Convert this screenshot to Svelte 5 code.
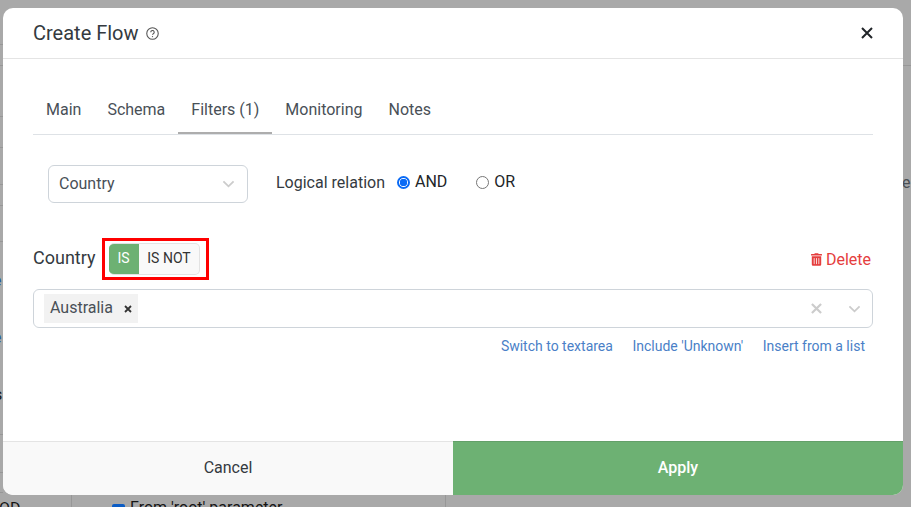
<script>
  const tabs = ['Main', 'Schema', 'Filters (1)', 'Monitoring', 'Notes'];
  const lefts = [44, 65, 116, 147, 184, 205, 241, 434, 472, 492];
</script>

<div class="page">
  <div class="behind" aria-hidden="true">
    {#each lefts as y}
      <i class="hline" style="top:{y}px"></i>
    {/each}
    <i class="rline"></i>
    <i class="vline a"></i>
    <i class="vline b"></i>
    <span class="bit blue b1">e</span>
    <span class="bit blue b2">e</span>
    <span class="bit dark b3">s</span>
    <span class="bit dark b4">e</span>
    <span class="bit dark b5">OD</span>
    <i class="check"></i>
    <span class="bit dark b6">From 'root' parameter</span>
  </div>

  <div class="modal">
    <header>
      <h1>Create Flow</h1>
      <svg class="help" viewBox="0 0 12 12" width="13" height="13">
        <circle cx="6" cy="6" r="5.300" fill="none" stroke="#555" stroke-width="1" />
        <path d="M4.400 4.900a1.600 1.600 0 1 1 2.400 1.300c-.5.300-.8.500-.8 1" fill="none" stroke="#555" stroke-width="1" />
        <circle cx="6" cy="8.800" r=".6" fill="#555" />
      </svg>
      <svg class="close" viewBox="0 0 12 12" width="12" height="12">
        <path d="M1 1l10 10M11 1L1 11" stroke="#212529" stroke-width="2" />
      </svg>
    </header>

    <main>
      <nav>
        {#each tabs as t, i}
          <span class="tab" class:active={i === 2}>{t}</span>
        {/each}
      </nav>

      <div class="settings">
        <div class="select">
          <span class="lift">Country</span>
          <svg viewBox="0 0 14 8" width="13" height="8"><path d="M1.500 1.200L7 6.500l5.500-5.300" fill="none" stroke="#ccc" stroke-width="2" /></svg>
        </div>
        <span class="logical">Logical relation</span>
        <label class="radio"><i class="dot on"></i><span class="lift">AND</span></label>
        <label class="radio second"><i class="dot"></i><span class="lift">OR</span></label>
      </div>

      <div class="filter-head">
        <span class="filter-name">Country</span>
        <div class="highlight">
          <div class="toggle">
            <span class="is">IS</span>
            <span class="isnot">IS NOT</span>
          </div>
        </div>
        <span class="delete">
          <svg viewBox="0 0 448 512" width="11" height="13"><path fill="#e53e3e" d="M32 464a48 48 0 0 0 48 48h288a48 48 0 0 0 48-48V128H32zm272-256a16 16 0 0 1 32 0v224a16 16 0 0 1-32 0zm-96 0a16 16 0 0 1 32 0v224a16 16 0 0 1-32 0zm-96 0a16 16 0 0 1 32 0v224a16 16 0 0 1-32 0zM432 32H312l-9.400-18.700A24 24 0 0 0 281.100 0H166.800a23.700 23.700 0 0 0-21.400 13.300L136 32H16A16 16 0 0 0 0 48v32a16 16 0 0 0 16 16h416a16 16 0 0 0 16-16V48a16 16 0 0 0-16-16z"/></svg>
          Delete
        </span>
      </div>

      <div class="multi">
        <span class="tag"><span class="lift">Australia</span>
          <svg viewBox="0 0 8 8" width="8" height="8"><path d="M1 1l6 6M7 1L1 7" stroke="#333" stroke-width="1.800" /></svg>
        </span>
        <svg class="clear" viewBox="0 0 12 12" width="11" height="11"><path d="M1 1l10 10M11 1L1 11" stroke="#ccc" stroke-width="2.400" /></svg>
        <svg class="caret" viewBox="0 0 14 8" width="13" height="8"><path d="M1.500 1.200L7 6.500l5.500-5.300" fill="none" stroke="#ccc" stroke-width="2" /></svg>
      </div>

      <div class="links">
        <span>Switch to textarea</span>
        <span>Include 'Unknown'</span>
        <span>Insert from a list</span>
      </div>
    </main>

    <footer>
      <button class="cancel">Cancel</button>
      <button class="apply">Apply</button>
    </footer>
  </div>
</div>

<style>
  :global(body) {
    margin: 0;
    background: #a9a9a9;
    font-family: Roboto, "Liberation Sans", sans-serif;
    color: #212529;
  }
  .page {
    position: relative;
    height: 507px;
    width: 911px;
    overflow: hidden;
    box-sizing: border-box;
    padding: 8px 8px 12px 3px;
    background: #a9a9a9;
  }
  .behind { position: absolute; inset: 0; }
  .hline { position: absolute; left: 0; width: 3px; height: 1px; background: #979797; }
  .rline { position: absolute; left: 903px; right: 0; top: 65px; height: 1px; background: #979797; }
  .vline { position: absolute; top: 495px; bottom: 0; width: 1px; background: #979797; }
  .vline.a { left: 71px; }
  .vline.b { left: 445px; }
  .bit { position: absolute; font-size: 16px; line-height: 18px; white-space: nowrap; }
  .blue { color: #2a5a9a; }
  .dark { color: #151515; }
  .b1 { left: -7px; top: 272px; }
  .b2 { left: -7px; top: 329px; }
  .b3 { left: -6px; top: 386px; }
  .b4 { left: 902px; top: 174px; color: #4a4f55; }
  .b5 { left: -1px; top: 500px; }
  .b6 { left: 130px; top: 499px; }
  .check { position: absolute; left: 112px; top: 504px; width: 13px; height: 13px; background: #0b5cc4; border-radius: 2px; }

  .modal {
    position: relative;
    height: 487px;
    background: #fff;
    border-radius: 10px;
    overflow: hidden;
    display: flex;
    flex-direction: column;
  }
  header {
    height: 50px;
    flex: none;
    border-bottom: 1px solid #e4e4e4;
    display: flex;
    align-items: center;
    padding: 0 30px;
    gap: 7px;
  }
  h1 { margin: 0; font-size: 20px; font-weight: 400; color: #343a40; }
  .close { margin-left: auto; }
  main { flex: 1; padding: 0 30px; display: flex; flex-direction: column; }
  nav {
    margin-top: 31px;
    height: 44px;
    display: flex;
    border-bottom: 1px solid #dee2e6;
    box-sizing: content-box;
  }
  .tab {
    padding: 0 13px;
    font-size: 16px;
    line-height: 40px;
    height: 44px;
    box-sizing: border-box;
    color: #495057;
  }
  .tab.active { border-bottom: 2px solid #adadad; }
  .settings {
    margin: 30px 0 0 15px;
    height: 38px;
    display: flex;
    align-items: center;
    font-size: 16px;
  }
  .select {
    width: 200px;
    height: 38px;
    box-sizing: border-box;
    border: 1px solid #ced4da;
    border-radius: 6px;
    display: flex;
    align-items: center;
    justify-content: space-between;
    padding: 0 12px 0 10px;
    color: #495057;
  }
  .lift { padding-bottom: 2px; }
  .logical { margin-left: 28px; padding-bottom: 3px; color: #343a40; }
  .radio { display: flex; align-items: center; gap: 5px; margin: -3px 0 0 12px; color: #212529; }
  .radio.second { margin-left: 29px; }
  .dot {
    width: 13px;
    height: 13px;
    box-sizing: border-box;
    border: 1px solid #767676;
    border-radius: 50%;
    background: #fff;
  }
  .dot.on { border: 2px solid #0b6bf5; background: radial-gradient(circle, #0b6bf5 0 3.500px, #fff 4px); }
  .filter-head {
    margin-top: 35px;
    height: 42px;
    display: flex;
    align-items: center;
  }
  .filter-name { font-size: 18px; padding-bottom: 4px; color: #343a40; }
  .highlight {
    margin-left: 6px;
    width: 107px;
    height: 42px;
    box-sizing: border-box;
    border: 3px solid #f00;
    padding: 2px 4px;
  }
  .toggle {
    width: 91px;
    height: 32px;
    box-sizing: border-box;
    border: 1px solid #e3e3e3;
    border-left: 0;
    border-radius: 5px;
    overflow: hidden;
    display: flex;
    font-size: 14px;
    line-height: 29px;
    text-align: center;
    background: #f9f9f9;
  }
  .is { width: 30px; margin: -1px 0; line-height: 31px; background: #6db173; color: #fff; }
  .isnot { flex: 1; padding-left: 1px; color: #333; }
  .delete {
    margin-left: auto;
    margin-right: 2px;
    color: #e53e3e;
    font-size: 16px;
    display: flex;
    align-items: center;
    gap: 4px;
  }
  .multi {
    margin-top: 9px;
    height: 39px;
    box-sizing: border-box;
    border: 1px solid #ced4da;
    border-radius: 6px;
    display: flex;
    align-items: center;
    padding: 0 11px 0 10px;
  }
  .tag {
    height: 29px;
    width: 94px;
    box-sizing: border-box;
    background: #f2f2f2;
    padding: 0 6px;
    display: flex;
    align-items: center;
    justify-content: space-between;
    font-size: 16px;
    color: #495057;
  }
  .clear { margin-left: auto; margin-right: 26px; }
  .links {
    margin: 9px 8px 0 0;
    display: flex;
    justify-content: flex-end;
    gap: 19.500px;
    font-size: 14px;
    line-height: 18px;
    color: #4a7fc7;
  }
  footer { flex: none; height: 54px; display: flex; }
  button {
    flex: 1;
    border: 0;
    margin: 0;
    padding: 0 0 2px;
    font: inherit;
    font-size: 16px;
  }
  .cancel { background: #f9f9f9; border-top: 1px solid #e4e4e4; color: #343a40; }
  .apply { background: #6db173; border-top: 1px solid #63a069; color: #fff; font-weight: 500; }
</style>
